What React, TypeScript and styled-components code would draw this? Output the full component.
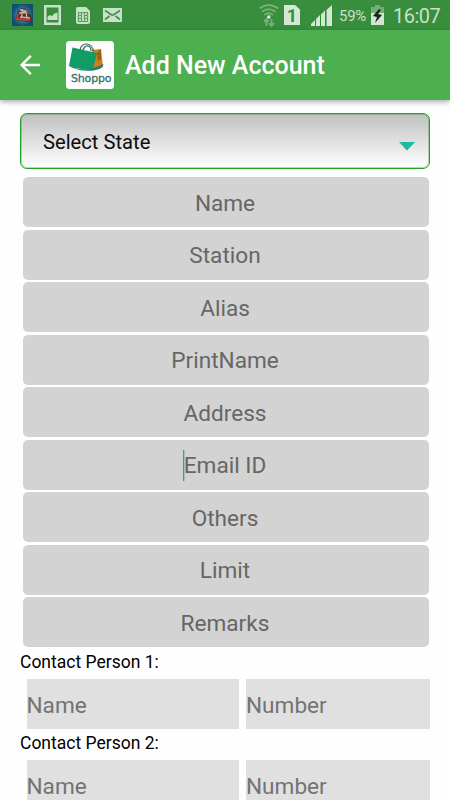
import React from "react";
import styled, { createGlobalStyle } from "styled-components";

const GlobalStyle = createGlobalStyle`
  * { box-sizing: border-box; }
  html, body { margin: 0; background: #fff; }
  body { font-family: Roboto, "Liberation Sans", sans-serif; color: #111; overflow: hidden; }
`;

const Screen = styled.div`
  width: 450px;
  height: 800px;
  overflow: hidden;
  background: #fefefe;
`;

const StatusBar = styled.header`
  display: flex;
  align-items: center;
  justify-content: space-between;
  height: 30px;
  padding: 0 10px 0 12px;
  background: #388e3c;
  color: #c9e0ca;
  svg { display: block; flex: none; }
`;

const Notifications = styled.div`
  display: flex;
  align-items: center;
`;

const Indicators = styled(Notifications)``;

const IconSlot = styled.span<{ $gap: number }>`
  margin-right: ${(p) => p.$gap}px;
`;

const BatteryLevel = styled.span`
  width: 27px;
  margin: 2px 5px 0 -1px;
  font-size: 15px;
  line-height: 20px;
  letter-spacing: -0.3px;
  white-space: nowrap;
`;

const Clock = styled.span`
  width: 47px;
  font-size: 20px;
  line-height: 24px;
  letter-spacing: -0.5px;
  margin-top: 1px;
  white-space: nowrap;
`;

const AppBar = styled.div`
  display: flex;
  align-items: center;
  height: 70px;
  padding-left: 18px;
  background: #4caf50;
  box-shadow: 0 2px 5px rgba(0, 0, 0, 0.32);
`;

const BackButton = styled.button`
  display: flex;
  width: 48px;
  padding: 0;
  border: 0;
  background: none;
`;

const Logo = styled.svg`
  display: block;
  width: 48px;
  height: 48px;
`;

const Title = styled.h1`
  margin: 1px 0 0 11px;
  color: #fff;
  font-size: 25px;
  font-weight: 500;
  line-height: 30px;
  white-space: nowrap;
`;

const Form = styled.main`
  padding: 13px 20px 0;
`;

const StateSelect = styled.div`
  display: flex;
  align-items: center;
  justify-content: space-between;
  height: 56px;
  padding: 2px 14px 0 22px;
  border: 1px solid #1ea322;
  border-radius: 7px;
  background: linear-gradient(#c0c0c0, #fff);
  box-shadow: inset 0 0 0 1px rgba(30, 163, 34, 0.35);
  color: #0c0c0c;
  font-size: 20.2px;
  svg { margin-top: 8px; }
`;

const Fields = styled.div`
  display: flex;
  flex-direction: column;
  gap: 2.5px;
  padding: 8.3px 1.5px 0 3px;
`;

const Field = styled.div`
  display: flex;
  align-items: center;
  justify-content: center;
  height: 50px;
  padding: 2.1px 1.5px 0 0;
  border-radius: 5px;
  background: #d3d3d3;
  color: #666;
  font-size: 22.6px;
`;

const Caret = styled.i`
  flex: none;
  width: 2px;
  height: 31px;
  margin: -1px -1px 0 -1px;
  background: linear-gradient(90deg, #2fa882 50%, #9fc4b7 50%);
`;

const Contact = styled.section`
  height: 81px;
`;

const Contacts = styled.div`
  padding-top: 4.7px;
`;

const ContactLabel = styled.h2`
  margin: 0;
  color: #000;
  font-size: 17.5px;
  font-weight: 400;
  line-height: 20px;
`;

const ContactFields = styled.div`
  display: grid;
  grid-template-columns: 212.5px 184px;
  gap: 7px;
  margin: 7px 0 0 6.5px;
`;

const ContactField = styled.div`
  display: flex;
  align-items: center;
  height: 50px;
  padding-top: 3px;
  background: #e0e0e0;
  color: #737373;
  font-size: 22.6px;
`;

const pale = "#c9e0ca";

const GameIcon = () => (
  <svg width="21" height="22" viewBox="0 0 21 22">
    <defs>
      <radialGradient id="sky">
        <stop offset="0" stopColor="#45b3c3" />
        <stop offset="1" stopColor="#124c73" />
      </radialGradient>
    </defs>
    <path fill="url(#sky)" d="M0 0h21v22H0z" />
    <path fill="#5b2c2c" d="m4 13 2-6 4-3 4 1 5 7 1 5-2 1-14-2z" />
    <path stroke="#c4b7aa" strokeWidth="1.3" fill="none" d="m8 6 6 1M7 9l9-.5M10.5 5l-1 9M14 7l1 8M8 13l10 1" />
    <path fill="#c03c36" d="m5 10 2 0-1 4 12 1v2L4 16zM13 5l2 1 2 4-2-1z" />
  </svg>
);

const PictureIcon = () => (
  <svg width="17" height="20" viewBox="0 0 17 20">
    <path fill={pale} fillRule="evenodd" d="M0 0h17v20H0zM2.5 2.5v15h12v-15z" />
    <path fill={pale} d="m3.5 15v-3l2.5-2 2 1 3-3 1 .5 1.5-1.5v8z" />
  </svg>
);

const SimIcon = () => (
  <svg width="14" height="17" viewBox="0 0 14 17">
    <path fill={pale} d="M2 0h8l4 4v11q0 2-2 2H2q-2 0-2-2V2q0-2 2-2z" />
    <path stroke="#59a15c" fill="none" strokeWidth="1.2" d="M2.5 5.5h9v9h-9zM5.5 5.5v9M8.5 5.5v9M2.5 8.5h3M8.5 8.5h3M2.5 11.5h3M8.5 11.5h3" />
  </svg>
);

const MailIcon = () => (
  <svg width="19" height="14" viewBox="0 0 19 14">
    <path fill={pale} d="M0 0h19v14H0z" />
    <path stroke="#438f46" fill="none" strokeWidth="1.6" d="m2 2.5 6 4q1.5 1 3 0l6-4M2 11.5l4.5-3.5M17 11.5 12.5 8" />
  </svg>
);

const WifiIcon = () => (
  <svg width="20" height="23" viewBox="0 0 20 23">
    <g fill="none" stroke="#75b178" strokeWidth="1.9">
      <path d="M.5 4.5q9-7 18.5 0M3 7.8q6.5-5 13.5 0M5.5 11q4-3.3 8.5 0" />
      <path d="M7.5 22v-7m-2.5 3 2.5-3 2 2.5M12.5 15v7m-2.5-3 2.5 3 2.5-3" />
    </g>
    <circle cx="9.8" cy="13" r="1.7" fill="#e0efe0" />
  </svg>
);

const SimSlotIcon = () => (
  <svg width="16" height="20" viewBox="0 0 16 20">
    <path fill="#d5e8d5" d="M0 0h11l5 4.5V20H0z" />
    <text x="8" y="16.5" fill="#388e3c" fontSize="18" fontWeight="700" textAnchor="middle">1</text>
  </svg>
);

const SignalIcon = () => (
  <svg width="21" height="21" viewBox="0 0 21 21">
    <path fill="#d5e8d5" d="M0 21v-2l4-4v6zM5 21v-7l4-4v11zM10 21V9.5l4-4V21zM15.5 21V5l5.5-5v21z" />
    <path stroke="#219327" d="M4.5 21v-6M9.5 21V11M14.7 21V6" />
  </svg>
);

const BatteryIcon = () => (
  <svg width="13" height="20" viewBox="0 0 13 20">
    <path fill="#73af76" d="M4 0h5v2h4v6H0V2h4z" />
    <path fill="#d1e5d1" d="M0 8h13v12H0z" />
    <path fill="#162819" d="m8 4-6 7 4 1-2 6 7-8-4-1 3-4z" />
  </svg>
);

const BackArrow = () => (
  <svg width="24" height="24" viewBox="0 0 24 24" fill="none" stroke="#fff" strokeWidth="2.4">
    <path d="M22 12H4M12.8 2.8 3.6 12l9.200 9.200" />
  </svg>
);

const ShoppoLogo = () => (
  <Logo viewBox="0 0 48 48">
    <rect width="48" height="48" rx="3.5" fill="#fdfdfd" />
    <path fill="#c98219" d="m26 9 9-1 2 18-10 3z" />
    <path fill="#995f12" d="m31 12 4-4 0 10-3 2z" />
    <path fill="#237987" d="M1.5 24q16 9 36-1 0 5-10 6.5-16 1.500-26-5.500z" />
    <path fill="#139b65" d="m6.5 6.5 24.5 5.500-4 16Q12 29 3 25z" />
    <path stroke="#315f65" strokeWidth="1.2" fill="none" d="M14 9q1-6 6.500-6t7 7M17 9q1-4 4-4 4 0 4 5" />
    <path stroke="#91a2a1" strokeWidth="1" fill="none" d="M18 8q5-9 10 1" />
    <text x="5" y="41" fill="#35716f" stroke="#35716f" strokeWidth=".3" fontFamily="DejaVu Sans" fontSize="11" textLength="40.500" lengthAdjust="spacing">Shoppo</text>
  </Logo>
);

const fields = ["Name", "Station", "Alias", "PrintName", "Address", "Email ID", "Others", "Limit", "Remarks"];

export default function App() {
  return (
    <Screen>
      <GlobalStyle />
      <StatusBar>
        <Notifications>
          <IconSlot $gap={11}><GameIcon /></IconSlot>
          <IconSlot $gap={15}><PictureIcon /></IconSlot>
          <IconSlot $gap={13}><SimIcon /></IconSlot>
          <MailIcon />
        </Notifications>
        <Indicators>
          <IconSlot $gap={5}><WifiIcon /></IconSlot>
          <IconSlot $gap={11}><SimSlotIcon /></IconSlot>
          <IconSlot $gap={8}><SignalIcon /></IconSlot>
          <BatteryLevel>59%</BatteryLevel>
          <IconSlot $gap={9}><BatteryIcon /></IconSlot>
          <Clock>16:07</Clock>
        </Indicators>
      </StatusBar>
      <AppBar>
        <BackButton aria-label="Back"><BackArrow /></BackButton>
        <ShoppoLogo />
        <Title>Add New Account</Title>
      </AppBar>
      <Form>
        <StateSelect>
          Select State
          <svg width="16" height="9" viewBox="0 0 16 9"><path fill="#1abc9c" d="M0 0h16L8 8.5z" /></svg>
        </StateSelect>
        <Fields>
          {fields.map((name) => (
            <Field key={name}>{name === "Email ID" && <Caret />}{name}</Field>
          ))}
        </Fields>
        <Contacts>
          {[1, 2].map((n) => (
            <Contact key={n}>
              <ContactLabel>Contact Person {n}:</ContactLabel>
              <ContactFields>
                <ContactField>Name</ContactField>
                <ContactField>Number</ContactField>
              </ContactFields>
            </Contact>
          ))}
        </Contacts>
      </Form>
    </Screen>
  );
}
